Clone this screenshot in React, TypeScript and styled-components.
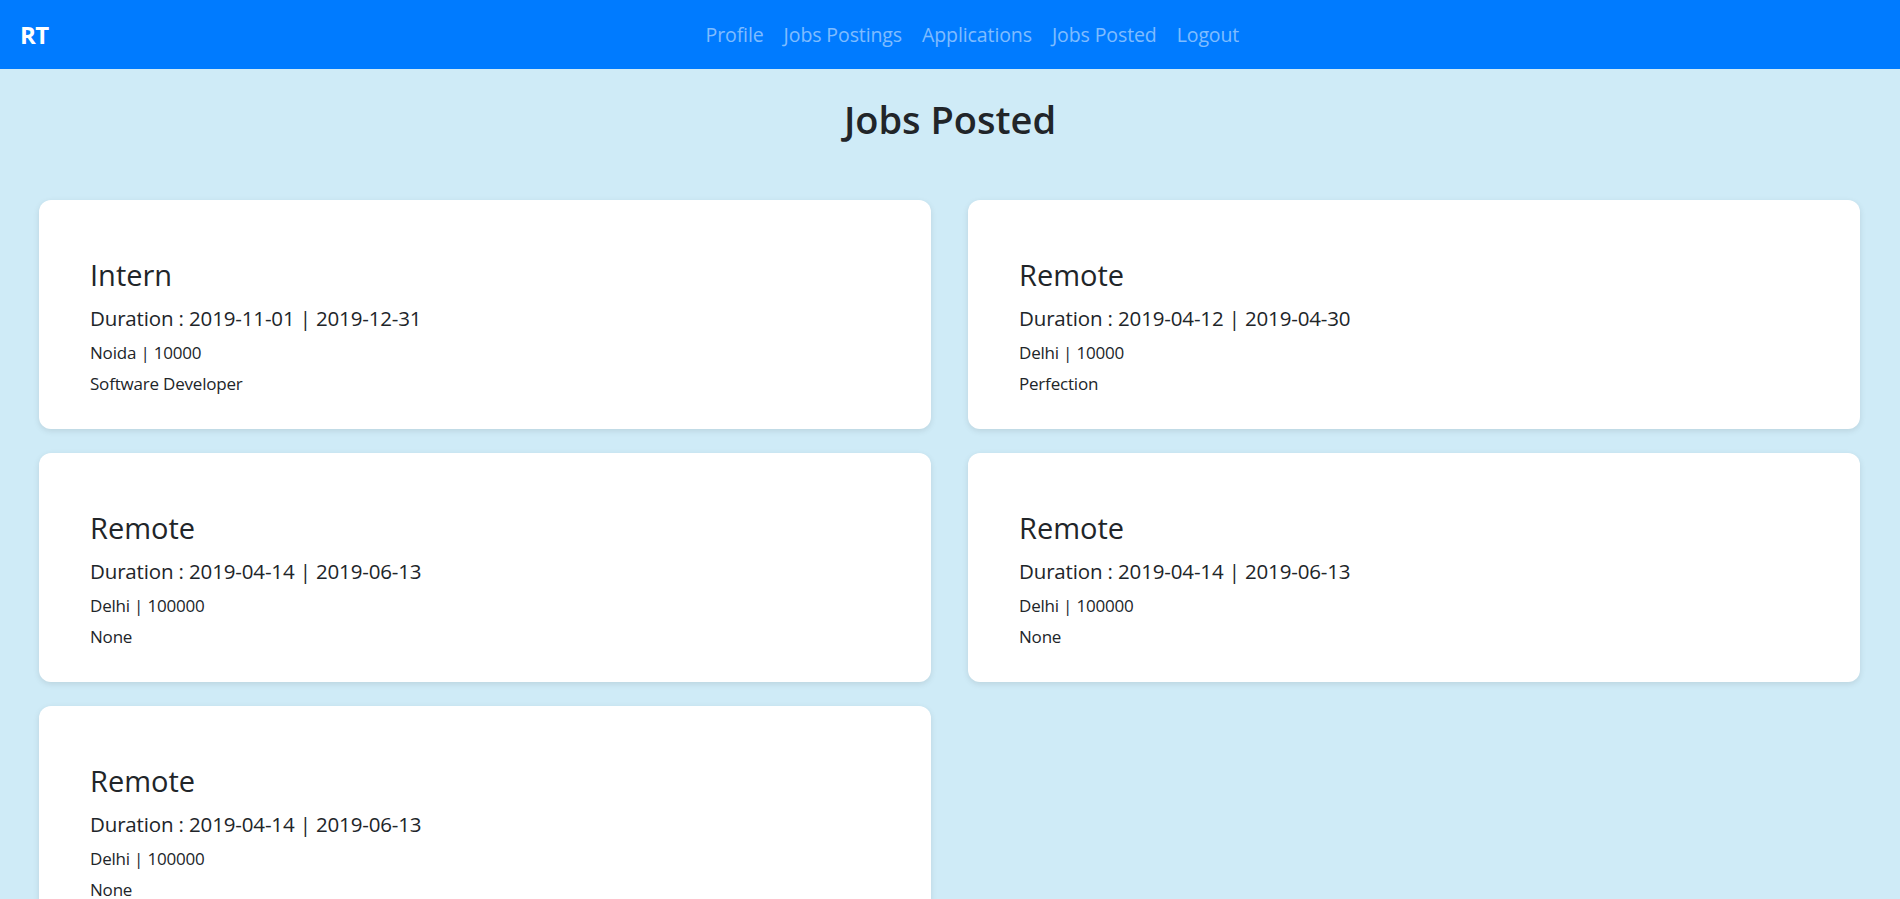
import React from 'react';
import styled, { createGlobalStyle } from 'styled-components';

interface Job {
  title: string;
  start: string;
  end: string;
  location: string;
  salary: string;
  description: string;
}

const jobs: Job[] = [
  { title: 'Intern', start: '2019-11-01', end: '2019-12-31', location: 'Noida', salary: '10000', description: 'Software Developer' },
  { title: 'Remote', start: '2019-04-12', end: '2019-04-30', location: 'Delhi', salary: '10000', description: 'Perfection' },
  { title: 'Remote', start: '2019-04-14', end: '2019-06-13', location: 'Delhi', salary: '100000', description: 'None' },
  { title: 'Remote', start: '2019-04-14', end: '2019-06-13', location: 'Delhi', salary: '100000', description: 'None' },
  { title: 'Remote', start: '2019-04-14', end: '2019-06-13', location: 'Delhi', salary: '100000', description: 'None' },
];

const GlobalStyle = createGlobalStyle`
  body {
    margin: 0;
    background: #cfebf7;
    font-family: 'Open Sans', 'Noto Sans', sans-serif;
    color: #212529;
  }
`;

const Navbar = styled.nav`
  height: 69px;
  background: #007bff;
  display: flex;
  align-items: center;
  padding: 0 20px;
`;

const Brand = styled.a`
  color: #fff;
  font-size: 24px;
  font-weight: 700;
  margin-right: 16px;
  letter-spacing: -0.5px;
`;

const NavLinks = styled.ul`
  list-style: none;
  margin: 0 auto;
  padding: 0;
  display: flex;
`;

const NavLink = styled.li`
  color: rgba(255, 255, 255, 0.5);
  font-size: 19.5px;
  padding: 0 10px;
  letter-spacing: -0.1px;
`;

const PageTitle = styled.h2`
  margin: 0;
  padding: 26px 0 57px;
  text-align: center;
  font-size: 38px;
  font-weight: 600;
  line-height: 48px;
`;

const CardGrid = styled.div`
  display: grid;
  grid-template-columns: 1fr 1fr;
  column-gap: 37px;
  row-gap: 24px;
  padding: 0 40px 25px 39px;
`;

const Card = styled.div`
  background: #fff;
  border-radius: 12px;
  box-shadow: 0 2px 6px rgba(0, 0, 0, 0.1);
  padding: 57px 51px 27px;
`;

const CardTitle = styled.h4`
  margin: 0 0 12px;
  font-size: 29px;
  font-weight: 400;
  line-height: 36px;
`;

const Duration = styled.h6`
  margin: 0 0 9px;
  font-size: 20.5px;
  font-weight: 400;
  line-height: 26px;
  letter-spacing: -0.15px;
`;

const Detail = styled.p`
  margin: 0 0 5px;
  font-size: 17px;
  line-height: 26px;
  letter-spacing: -0.2px;
`;

const JobCard: React.FC<{ job: Job }> = ({ job }) => (
  <Card>
    <CardTitle>{job.title}</CardTitle>
    <Duration>
      Duration : {job.start} | {job.end}
    </Duration>
    <Detail>
      {job.location} | {job.salary}
    </Detail>
    <Detail>{job.description}</Detail>
  </Card>
);

export default function App() {
  return (
    <>
      <GlobalStyle />
      <Navbar>
        <Brand>RT</Brand>
        <NavLinks>
          {['Profile', 'Jobs Postings', 'Applications', 'Jobs Posted', 'Logout'].map((l) => (
            <NavLink key={l}>{l}</NavLink>
          ))}
        </NavLinks>
      </Navbar>
      <PageTitle>Jobs Posted</PageTitle>
      <CardGrid>
        {jobs.map((job, i) => (
          <JobCard key={i} job={job} />
        ))}
      </CardGrid>
    </>
  );
}
